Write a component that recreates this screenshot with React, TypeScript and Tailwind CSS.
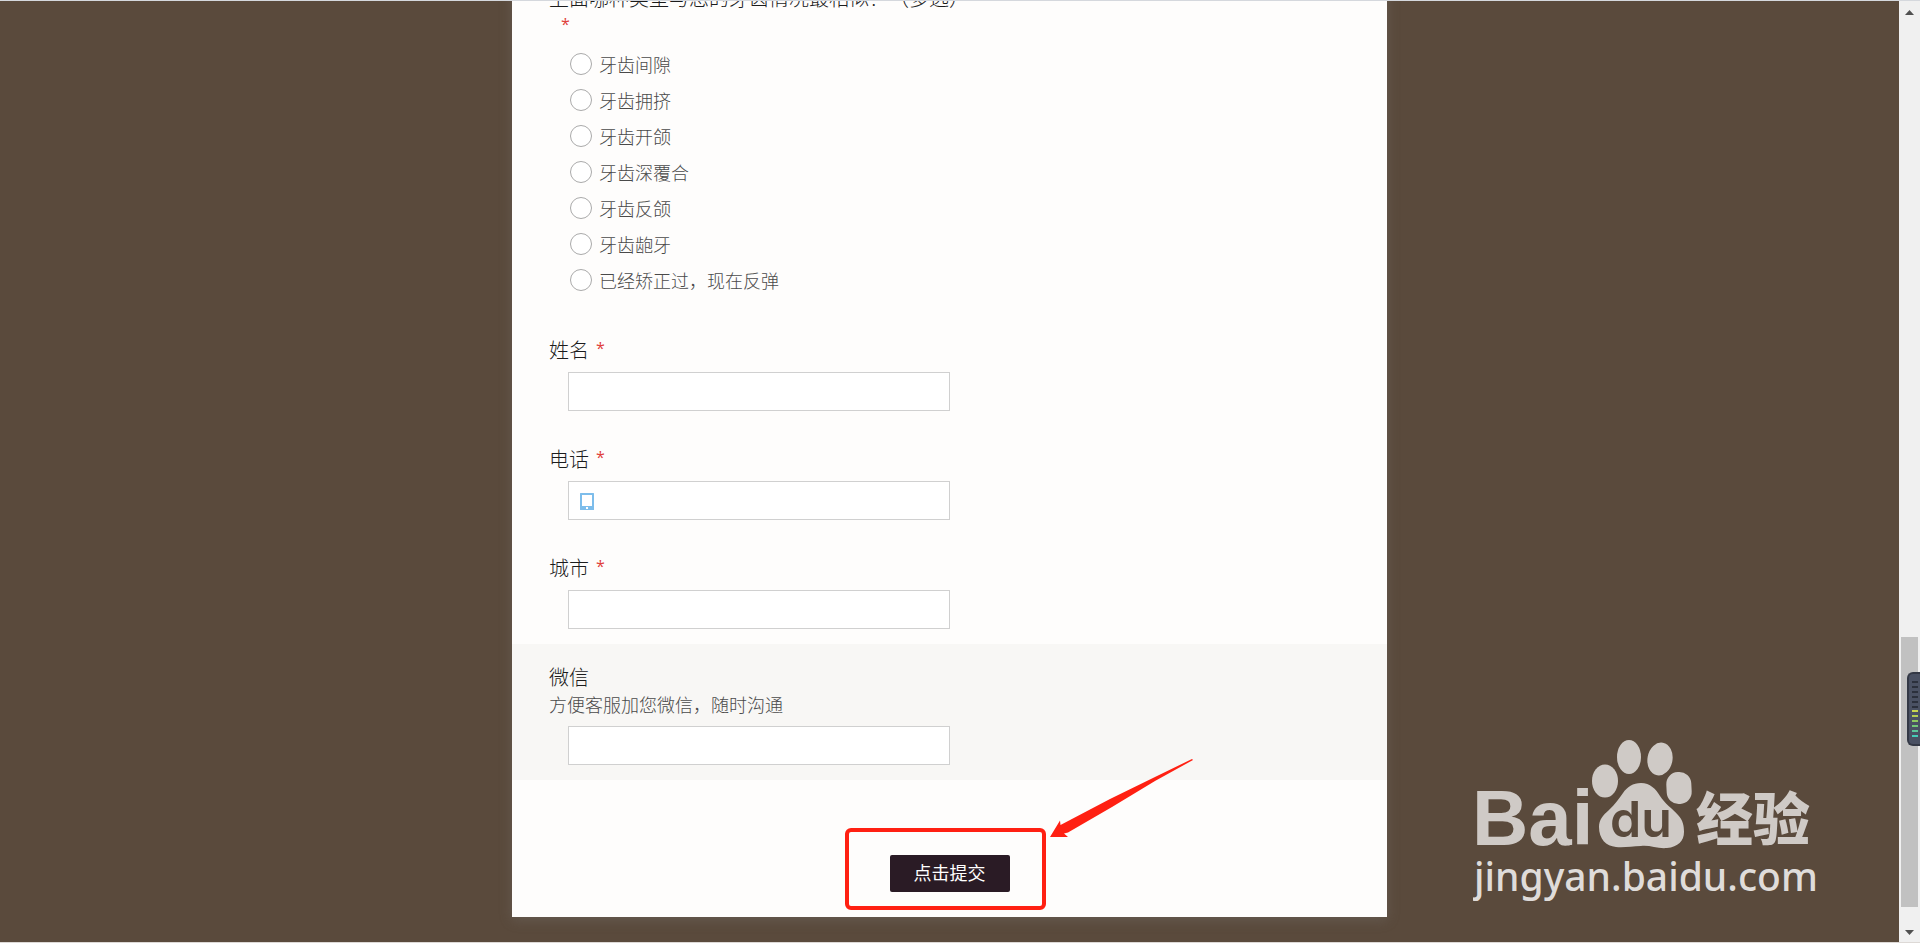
import { useState } from "react";

const OPTIONS = [
  "牙齿间隙",
  "牙齿拥挤",
  "牙齿开颌",
  "牙齿深覆合",
  "牙齿反颌",
  "牙齿龅牙",
  "已经矫正过，现在反弹",
];

type FieldProps = {
  id: string;
  label: string;
  required?: boolean;
  hint?: string;
  phone?: boolean;
};

const METER = [
  "bg-[#2b303c]",
  "bg-[#2b303c]",
  "bg-[#2b303c]",
  "bg-[#2b303c]",
  "bg-[#2b303c]",
  "bg-[#2b303c]",
  "bg-[#c9d64f]",
  "bg-[#b4cf52]",
  "bg-[#8fc860]",
  "bg-[#74c878]",
  "bg-[#5cc79a]",
  "bg-[#45cdb8]",
];

function PhoneIcon() {
  return (
    <svg
      width="14"
      height="17"
      viewBox="0 0 14 17"
      className="pointer-events-none absolute left-3 top-3"
      aria-hidden="true"
    >
      <path
        d="M0.500 0h13a.5.5 0 0 1 .5.5v16a.5.5 0 0 1-.5.5H.5a.5.5 0 0 1-.5-.5V.5a.5.5 0 0 1 .5-.5zM2 2v11h10V2zM6 14v2h2v-2z"
        fill="#7dbdeb"
        fillRule="evenodd"
      />
    </svg>
  );
}

function RequiredMark() {
  return (
    <span className="font-['Open_Sans',sans-serif] text-base leading-6 font-normal text-[#e0403a]">
      *
    </span>
  );
}

function Field({ id, label, required, hint, phone }: FieldProps) {
  return (
    <div className={`px-[37px] pt-[19px] pb-[15px] ${hint ? "bg-[#f8f7f5]" : ""}`}>
      <label htmlFor={id} className="flex items-start gap-[7px] text-xl leading-7 text-[#1c1c1c]">
        {label}
        {required && <RequiredMark />}
      </label>
      {hint && <p className="text-lg leading-[27px] text-[#4a4a4a]">{hint}</p>}
      <div className="relative mt-2 ml-[19px] w-[382px] max-w-full">
        <input
          id={id}
          type={phone ? "tel" : "text"}
          className={`block h-[39px] w-full border border-[#d0d0d0] bg-white pr-3 text-lg text-[#333] outline-none ${
            phone ? "pl-9" : "pl-3"
          }`}
        />
        {phone && <PhoneIcon />}
      </div>
    </div>
  );
}

function Watermark() {
  return (
    <svg
      width="360"
      height="180"
      viewBox="0 0 360 180"
      className="pointer-events-none absolute right-[66px] bottom-[32px]"
      role="img"
    >
      <g fill="#cfcac6">
        <text x="-1" y="115" fontSize="78" fontWeight="700" fontFamily="Liberation Sans, sans-serif">
          Bai
        </text>
        <ellipse cx="132" cy="51" rx="13" ry="16.500" />
        <ellipse cx="156" cy="27" rx="12" ry="17" />
        <ellipse cx="187" cy="29" rx="12.500" ry="16.500" transform="rotate(10 187 29)" />
        <rect x="193.500" y="42" width="25" height="32" rx="12" transform="rotate(-3 206 58)" />
        <path d="M168 53c9 0 15 6 19 13 5 8 12 12 18 19 5 5 6 11 6 17 0 9-6 15-17 16-9 1-17-3-26-2-9 0-17 2-25 1-10-1-17-8-17-20 0-7 4-12 10-17 6-6 10-11 14-17 4-6 10-10 18-10z" />
        <text
          x="223"
          y="110"
          fontSize="57"
          fontWeight="900"
          fontFamily="Noto Sans CJK SC, sans-serif"
        >
          经验
        </text>
      </g>
      <text
        x="137"
        y="107"
        fill="#5a4a3c"
        fontSize="50"
        fontWeight="600"
        fontFamily="Inter, sans-serif"
      >
        du
      </text>
      <text
        x="1"
        y="161"
        fill="#dfdcda"
        fontSize="39"
        fontWeight="500"
        fontFamily="Noto Sans, sans-serif"
      >
        jingyan.baidu.com
      </text>
    </svg>
  );
}

function ScrollRail() {
  return (
    <aside className="relative flex w-[21px] shrink-0 flex-col items-center bg-[#f0f0f0]">
      <svg width="9" height="5" viewBox="0 0 9 5" className="mt-[9px] shrink-0">
        <path d="M0 5L4.500 0L9 5z" fill="#505050" />
      </svg>
      <div className="grow-[621]" />
      <div className="w-[17px] grow-[270] bg-[#c1c1c1]" />
      <div className="grow-[23]" />
      <svg width="9" height="5" viewBox="0 0 9 5" className="mb-[7px] shrink-0">
        <path d="M0 0L4.500 5L9 0z" fill="#505050" />
      </svg>
      {/* level meter docked to the window edge */}
      <div className="absolute right-0 bottom-[196px] flex h-[74px] w-[13px] flex-col items-center justify-between rounded-l-md border-2 border-r-0 border-[#343946] bg-[#4a5163] py-[7px]">
        {METER.map((color, i) => (
          <span key={i} className={`h-[2px] w-[6px] ${color}`} />
        ))}
      </div>
    </aside>
  );
}

export default function App() {
  const [choice, setChoice] = useState("");

  return (
    <div className="flex h-screen flex-col overflow-hidden border-t border-b border-t-[#d5d8dd] border-b-[#ddd9d6] bg-[#5a4a3c] font-['Noto_Sans_CJK_SC',sans-serif] font-light">
      <div className="flex min-h-0 flex-1">
        <main className="relative min-w-0 flex-1 overflow-hidden">
          <form
            onSubmit={(e) => e.preventDefault()}
            className="mx-auto -mt-[37px] max-w-[875px] bg-[#fefdfc] shadow-[0_3px_12px_rgba(130,130,130,0.3)]"
          >
            <fieldset aria-labelledby="teeth-title" className="px-[37px] pt-5 pb-[19px]">
              <p id="teeth-title" className="text-xl leading-7 text-[#1c1c1c]">
                上面哪种类型与您的牙齿情况最相似？（多选）
              </p>
              <div className="ml-3 flex">
                <RequiredMark />
              </div>
              <div className="mt-[10px] ml-[21px]">
                {OPTIONS.map((option) => (
                  <label
                    key={option}
                    className="flex h-9 items-center gap-[7px] text-lg leading-7 text-[#4a4a4a]"
                  >
                    <input
                      type="radio"
                      name="teeth"
                      value={option}
                      checked={choice === option}
                      onChange={() => setChoice(option)}
                      className="size-[22px] appearance-none rounded-full border border-[#aaa] bg-white checked:border-[6px]"
                    />
                    {option}
                  </label>
                ))}
              </div>
            </fieldset>

            <Field id="name" label="姓名" required />
            <Field id="phone" label="电话" required phone />
            <Field id="city" label="城市" required />
            <Field id="wechat" label="微信" hint="方便客服加您微信，随时沟通" />

            <div className="flex justify-center pt-[75px] pb-[25px]">
              <div className="relative">
                <button
                  type="submit"
                  className="block h-[37px] w-[120px] rounded-xs bg-[#2a1b25] pb-1 text-lg leading-7 font-normal text-white"
                >
                  点击提交
                </button>
                {/* highlight frame and arrow */}
                <div className="pointer-events-none absolute -top-[27px] -right-9 -bottom-[18px] -left-[45px] rounded-md border-4 border-[#ff2012]" />
                <svg
                  width="144"
                  height="80"
                  viewBox="0 0 144 80"
                  className="pointer-events-none absolute bottom-[54px] left-40"
                  aria-hidden="true"
                >
                  <path
                    d="M0 79L10 62.500L10.500 67L60 41L105 19L142 1L143 2L105 23L62 49L18 74.500L14 75.500L18 79z"
                    fill="#ff2012"
                  />
                </svg>
              </div>
            </div>
          </form>
          <Watermark />
        </main>
        <ScrollRail />
      </div>
    </div>
  );
}
